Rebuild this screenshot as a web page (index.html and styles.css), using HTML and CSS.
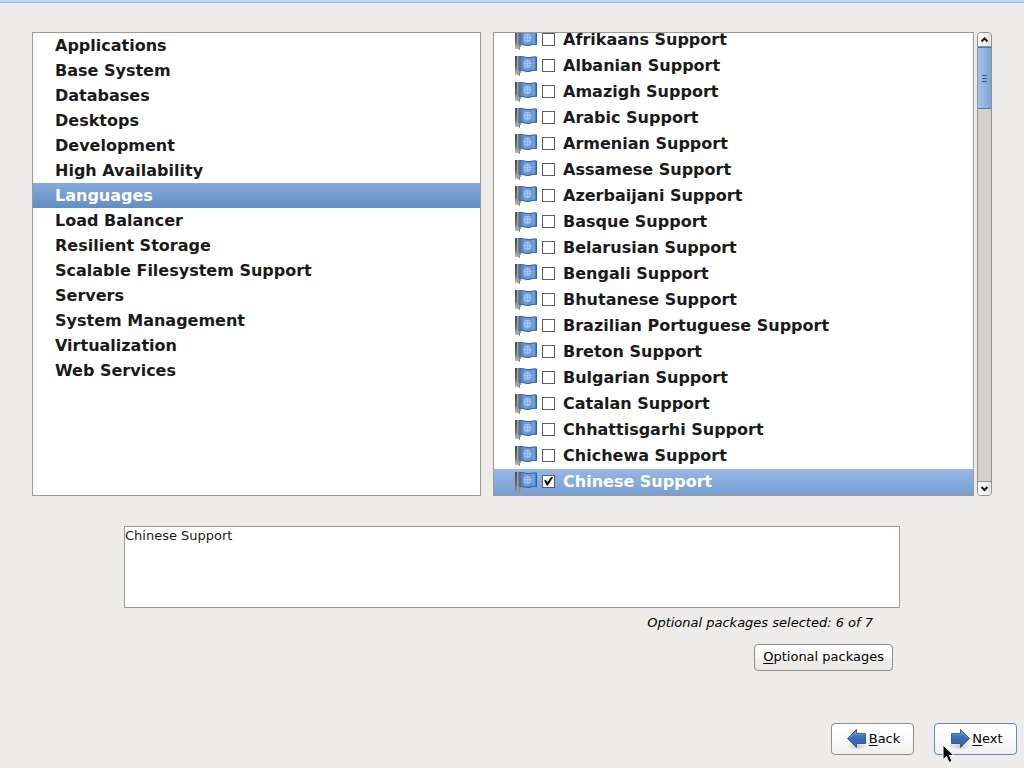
FILE: index.html
```html
<!DOCTYPE html>
<html lang="en">
<head>
  <meta charset="UTF-8" />
  <title>Package Selection</title>
  <link rel="stylesheet" href="styles.css">
</head>
<body>
  <svg class="sprite" aria-hidden="true">
    <defs>
      <linearGradient id="cloth" x1="0" y1="0" x2="1" y2="0">
        <stop offset="0" stop-color="#3f76ba" />
        <stop offset="0.35" stop-color="#6c9fda" />
        <stop offset="0.7" stop-color="#5b92d2" />
        <stop offset="0.85" stop-color="#78a8e0" />
        <stop offset="1" stop-color="#3567aa" />
      </linearGradient>
      <linearGradient id="pole" x1="0" y1="0" x2="0" y2="1">
        <stop offset="0" stop-color="#4c4e4a" />
        <stop offset="0.6" stop-color="#666862" />
        <stop offset="1" stop-color="#73756f" stop-opacity="0.4" />
      </linearGradient>
      <linearGradient id="arrow" x1="0" y1="0" x2="0" y2="1">
        <stop offset="0" stop-color="#5a8aca" />
        <stop offset="0.5" stop-color="#3a6db5" />
        <stop offset="1" stop-color="#3567ad" />
      </linearGradient>
      <radialGradient id="shade">
        <stop offset="0" stop-color="#000" stop-opacity="0.2" />
        <stop offset="1" stop-color="#000" stop-opacity="0" />
      </radialGradient>
      <symbol id="flag" viewBox="0 0 24 24">
        <rect x="1" y="3" width="2" height="19" fill="url(#pole)" />
        <rect x="3" y="3" width="2" height="19" fill="#a5a69f" />
        <path d="M5.500 16v7M7.500 15l-1 5" stroke="#888a85" stroke-width="1" />
        <path d="M5 3.500C8 3 11 4.500 14.500 4.500S20 3.500 22.500 4V17.500C19 16.500 17 18.500 14 18.500S9 17 5 17.500z" fill="url(#cloth)" stroke="#305f9f" />
        <path d="M5 4h2v13l-2 1z" fill="#5d7289" />
        <circle cx="13.500" cy="10.500" r="3.500" fill="#82aee2" stroke="#a4c3ea" />
        <path d="M10 10.500h7M13.500 7v7M9.500 13q4 3.500 8 0" fill="none" stroke="#b4ceee" stroke-width="0.700" />
      </symbol>
      <symbol id="arrow-right" viewBox="0 0 24 24">
        <ellipse cx="12" cy="20" rx="10" ry="4" fill="url(#shade)" />
        <path d="M3.500 7.500H12.500V3.500L21.500 12.500L12.500 21.500V17.500H3.500z" fill="url(#arrow)" stroke="#204a87" stroke-opacity="0.800" stroke-linejoin="round" />
        <path d="M4.500 8.500H13.500V6L20 12.500" fill="none" stroke="#7fa6da" stroke-opacity="0.600" />
      </symbol>
    </defs>
  </svg>

  <main class="screen">
    <div class="panes">
      <ul class="pane categories">
        <li><button class="category">Applications</button></li>
        <li><button class="category">Base System</button></li>
        <li><button class="category">Databases</button></li>
        <li><button class="category">Desktops</button></li>
        <li><button class="category">Development</button></li>
        <li><button class="category">High Availability</button></li>
        <li><button class="category selected">Languages</button></li>
        <li><button class="category">Load Balancer</button></li>
        <li><button class="category">Resilient Storage</button></li>
        <li><button class="category">Scalable Filesystem Support</button></li>
        <li><button class="category">Servers</button></li>
        <li><button class="category">System Management</button></li>
        <li><button class="category">Virtualization</button></li>
        <li><button class="category">Web Services</button></li>
      </ul>

      <div class="pane groups" id="groups">
        <label class="group"><svg class="flag"><use href="#flag" /></svg><input type="checkbox">Afrikaans Support</label>
        <label class="group"><svg class="flag"><use href="#flag" /></svg><input type="checkbox">Albanian Support</label>
        <label class="group"><svg class="flag"><use href="#flag" /></svg><input type="checkbox">Amazigh Support</label>
        <label class="group"><svg class="flag"><use href="#flag" /></svg><input type="checkbox">Arabic Support</label>
        <label class="group"><svg class="flag"><use href="#flag" /></svg><input type="checkbox">Armenian Support</label>
        <label class="group"><svg class="flag"><use href="#flag" /></svg><input type="checkbox">Assamese Support</label>
        <label class="group"><svg class="flag"><use href="#flag" /></svg><input type="checkbox">Azerbaijani Support</label>
        <label class="group"><svg class="flag"><use href="#flag" /></svg><input type="checkbox">Basque Support</label>
        <label class="group"><svg class="flag"><use href="#flag" /></svg><input type="checkbox">Belarusian Support</label>
        <label class="group"><svg class="flag"><use href="#flag" /></svg><input type="checkbox">Bengali Support</label>
        <label class="group"><svg class="flag"><use href="#flag" /></svg><input type="checkbox">Bhutanese Support</label>
        <label class="group"><svg class="flag"><use href="#flag" /></svg><input type="checkbox">Brazilian Portuguese Support</label>
        <label class="group"><svg class="flag"><use href="#flag" /></svg><input type="checkbox">Breton Support</label>
        <label class="group"><svg class="flag"><use href="#flag" /></svg><input type="checkbox">Bulgarian Support</label>
        <label class="group"><svg class="flag"><use href="#flag" /></svg><input type="checkbox">Catalan Support</label>
        <label class="group"><svg class="flag"><use href="#flag" /></svg><input type="checkbox">Chhattisgarhi Support</label>
        <label class="group"><svg class="flag"><use href="#flag" /></svg><input type="checkbox">Chichewa Support</label>
        <label class="group selected"><svg class="flag"><use href="#flag" /></svg><input type="checkbox" checked>Chinese Support</label>
      </div>

      <div class="scrollbar">
        <button class="stepper up" aria-label="Scroll up">
          <svg viewBox="0 0 13 13"><path d="M3.500 8.500l3-3 3 3" /></svg>
        </button>
        <div class="trough">
          <div class="thumb" role="scrollbar" aria-controls="groups" aria-valuenow="0"><i></i><i></i><i></i></div>
        </div>
        <button class="stepper down" aria-label="Scroll down">
          <svg viewBox="0 0 13 13"><path d="M3.500 5l3 3 3-3" /></svg>
        </button>
      </div>
    </div>

    <section class="details">
      <textarea class="description" aria-label="Description" readonly>Chinese Support</textarea>
      <p class="summary">Optional packages selected: 6 of 7</p>
      <button class="btn optional"><span><u>O</u>ptional packages</span></button>
    </section>
  </main>

  <footer class="nav">
    <button class="btn nav-btn"><svg class="arrow back"><use href="#arrow-right" /></svg><span><u>B</u>ack</span></button>
    <button class="btn nav-btn focused"><svg class="arrow"><use href="#arrow-right" /></svg><span><u>N</u>ext</span></button>
  </footer>

  <svg class="pointer" viewBox="0 0 14 20" aria-hidden="true">
    <path d="M1 1V15.500L4.500 12.500L7 18.500L10 17.200L7.500 11.500H12z" fill="#000" stroke="#fff" />
  </svg>
</body>
</html>
```
FILE: styles.css
```css
* {
  box-sizing: border-box;
}

body {
  margin: 0;
  height: 100vh;
  display: flex;
  flex-direction: column;
  overflow: hidden;
  background: #edeceb;
  color: #1a1a1a;
  font-family: "DejaVu Sans", sans-serif;
  font-size: 13px;
}

/* bottom edge of the banner */
body::before {
  content: "";
  height: 2px;
  background: #c1d6ef;
  border-bottom: 1px solid #93b8e2;
}

button,
textarea {
  font: inherit;
  color: inherit;
}

.sprite {
  position: absolute;
  width: 0;
  height: 0;
}

.screen {
  flex: 1;
  min-height: 0;
  display: flex;
  flex-direction: column;
  padding: 29px 32px 0;
}

/* lists */
.panes {
  flex: 1;
  min-height: 0;
  display: flex;
}

.pane {
  margin: 0;
  padding: 0;
  overflow: hidden;
  background: #fff;
  border: 1px solid #9c9a97;
  font-size: 16px;
  font-weight: bold;
}

.categories {
  flex: 14;
  margin-right: 12px;
  list-style: none;
}

.category {
  display: block;
  width: 100%;
  height: 25px;
  padding: 0 22px;
  border: 0;
  background: none;
  line-height: 25px;
  text-align: left;
}

.category.selected {
  background: linear-gradient(#86abdc, #638dc4);
  color: #fff;
}

.groups {
  flex: 15;
  display: flex;
  flex-direction: column;
  justify-content: flex-end;
}

.group {
  flex: none;
  display: flex;
  align-items: center;
  height: 26px;
  padding: 0 0 2px 20px;
}

.group.selected {
  background: linear-gradient(#98b8e4, #779dd1);
  color: #fff;
}

.flag {
  width: 24px;
  height: 24px;
}

.group input {
  appearance: none;
  display: grid;
  place-items: center;
  width: 13px;
  height: 13px;
  margin: 0 8px 0 4px;
  border: 1px solid #5c5c5a;
  background: #fff;
}

.group input:checked::before {
  content: "";
  width: 9px;
  height: 9px;
  background: #000;
  clip-path: polygon(0 45%, 20% 38%, 38% 62%, 85% 0, 100% 8%, 42% 100%, 30% 100%);
}

/* scrollbar */
.scrollbar {
  display: flex;
  flex-direction: column;
  width: 15px;
  margin-left: 3px;
  border: 1px solid #93918e;
  border-radius: 4px;
  overflow: hidden;
  background: #d3d1cf;
}

.stepper {
  height: 14px;
  padding: 0;
  border: 0;
  background: linear-gradient(90deg, #fff, #e4e3e1);
}

.stepper svg {
  display: block;
  width: 13px;
  height: 13px;
  fill: none;
  stroke: #1a1a1a;
  stroke-width: 2;
}

.up {
  border-bottom: 1px solid #93918e;
}

.down {
  border-top: 1px solid #93918e;
}

.trough {
  flex: 1;
}

.thumb {
  display: flex;
  flex-direction: column;
  align-items: center;
  justify-content: center;
  gap: 2px;
  height: 62px;
  margin: 0 -1px;
  border: 1px solid #4f78b0;
  background: linear-gradient(90deg, #a5c4ec, #7ba3d8);
}

.thumb i {
  width: 5px;
  height: 1px;
  background: #36598c;
}

/* details */
.details {
  display: flex;
  flex-direction: column;
  align-items: flex-end;
  padding: 30px 92px 52px;
}

.description {
  width: 100%;
  height: 82px;
  padding: 0;
  border: 1px solid #9c9a97;
  outline: none;
  resize: none;
  background: #fff;
  line-height: 17px;
}

.summary {
  margin: 6px 27px 13px 0;
  line-height: 17px;
  font-style: italic;
  color: #000;
}

.btn {
  display: flex;
  align-items: center;
  justify-content: center;
  padding: 0 8px 2px;
  border: 1px solid #8f8d8a;
  border-radius: 4px;
  background: linear-gradient(#fff, #f8f8f7 50%, #efeeed 60%, #e9e8e7);
  color: #000;
}

.btn u {
  text-underline-offset: 2px;
}

.optional {
  height: 27px;
  margin-right: 7px;
}

/* bottom buttons */
.nav {
  display: flex;
  justify-content: flex-end;
  gap: 20px;
  padding: 0 7px 13px;
}

.nav-btn {
  width: 83px;
  height: 32px;
  background: linear-gradient(#fff, #fafafa 55%, #f0efee);
}

.nav-btn.focused {
  border-color: #5d88c0;
}

.arrow {
  width: 24px;
  height: 24px;
}

.arrow.back {
  transform: scaleX(-1);
}

.pointer {
  position: absolute;
  left: 942px;
  top: 744px;
  width: 14px;
  height: 20px;
}
```
